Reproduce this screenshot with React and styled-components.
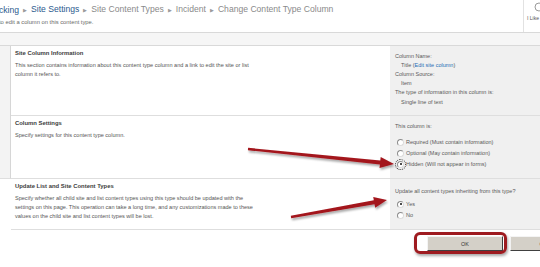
import styled, { createGlobalStyle } from "styled-components"

const Global = createGlobalStyle`
  html, body { margin: 0; padding: 0; background: #fff; }
`

const Page = styled.div`
  position: relative;
  width: 540px;
  height: 267px;
  overflow: hidden;
  background: #fff;
  font-family: "Liberation Sans", Arial, sans-serif;
  color: #555;
`

const Header = styled.header`
  display: flex;
  height: 33px;
  box-sizing: border-box;
  border-bottom: 1px solid #d9d9d9;
`

const TitleArea = styled.div`
  flex: 1;
  padding-top: 4px;
  margin-left: -1px;
  overflow: hidden;
`

const Crumbs = styled.div`
  display: flex;
  align-items: center;
  white-space: nowrap;
  font-size: 8.6px;
  line-height: 11px;
`

const Crumb = styled.span`
  color: ${(p) => (p.$link ? "#2b5a8e" : "#8a8a8a")};
`

const Sep = styled.span`
  color: #9a9a9a;
  font-size: 5px;
  margin: 0 4px;
`

const Subtitle = styled.div`
  font-size: 5.8px;
  color: #6a6a6a;
  margin-top: 3px;
  white-space: nowrap;
`

const Social = styled.div`
  width: 17px;
  border-left: 1px solid #e2e2e2;
  display: flex;
  flex-direction: column;
  padding: 2px 0 0 3px;
  box-sizing: border-box;
  overflow: hidden;
`

const SocialText = styled.span`
  font-size: 5px;
  color: #555;
  margin-top: 3px;
  white-space: nowrap;
`

const Band = styled.div`
  height: 12px;
  background: #f6f6f6;
  border-bottom: 1px solid #d9d9d9;
`

const Body = styled.div`
  display: flex;
  align-items: flex-start;
`

const Side = styled.div`
  width: 11px;
  height: 133px;
  flex-shrink: 0;
  background: #f3f3f3;
  border-right: 1px solid #d6d6d6;
  border-bottom: 1px solid #dedede;
  box-sizing: border-box;
`

const Main = styled.div`
  flex: 1;
`

const Section = styled.section`
  display: flex;
  height: ${(p) => p.$h}px;
  box-sizing: border-box;
  border-bottom: 1px solid #dedede;
`

const Describe = styled.div`
  width: 379px;
  flex-shrink: 0;
  box-sizing: border-box;
  padding: 3px 0 0 4px;
`

const SecTitle = styled.h3`
  margin: 0 0 3.5px;
  font-size: 5.9px;
  line-height: 8px;
  font-weight: bold;
  color: #3c3c3c;
`

const SecText = styled.p`
  margin: 0;
  max-width: 241px;
  font-size: 5.55px;
  line-height: 9px;
  color: #555;
`

const Field = styled.div`
  flex: 1;
  background: #f0f0f0;
  padding: ${(p) => p.$top}px 0 0 5px;
  font-size: 5.5px;
  line-height: 9.2px;
  color: #5a5a5a;
`

const Label = styled.div``

const Value = styled.div`
  padding-left: 6px;
`

const Link = styled.span`
  color: #1f6eb5;
`

const Options = styled.div`
  margin-top: ${(p) => p.$gap}px;
`

const Option = styled.label`
  display: flex;
  align-items: center;
  height: 11px;
  gap: 2px;
  padding-left: 2px;
`

const Radio = styled.span`
  position: relative;
  width: 5px;
  height: 5px;
  border-radius: 50%;
  background: #fff;
  border: 1px solid #8c8c8c;
  border-right-color: #dcdcdc;
  border-bottom-color: #dcdcdc;
  outline: ${(p) => (p.$focus ? "1px dotted #333" : "none")};
  outline-offset: 1px;
  &::after {
    content: "";
    display: ${(p) => (p.$on ? "block" : "none")};
    position: absolute;
    left: 1.5px;
    top: 1.5px;
    width: 2px;
    height: 2px;
    border-radius: 50%;
    background: #111;
  }
`

const ButtonRow = styled.div`
  position: relative;
  display: flex;
  gap: 7px;
  padding: 6px 0 0 427px;
  white-space: nowrap;
`

const Button = styled.button`
  flex-shrink: 0;
  width: 76px;
  height: 15px;
  padding: 0;
  background: #d4d0c8;
  border: 1px solid;
  border-color: #f4f4f4 #404040 #404040 #f4f4f4;
  font-family: "Liberation Sans", Arial, sans-serif;
  font-size: 5.4px;
  color: #333;
`

const Highlight = styled.div`
  position: absolute;
  left: 414px;
  top: 2px;
  width: 93px;
  height: 22px;
  box-sizing: border-box;
  border: 3px solid #9e1b20;
  border-radius: 6px;
  box-shadow: 1px 2px 3px rgba(0, 0, 0, 0.35);
`

const Overlay = styled.svg`
  position: absolute;
  left: 0;
  top: 0;
  pointer-events: none;
`

function Arrows() {
  return (
    <Overlay width="540" height="267" viewBox="0 0 540 267">
      <defs>
        <filter id="sh" x="-10%" y="-50%" width="120%" height="200%">
          <feDropShadow dx="1" dy="2" stdDeviation="1" floodColor="#000" floodOpacity="0.35" />
        </filter>
      </defs>
      <g fill="#a3151c" filter="url(#sh)">
        <polygon points="248.1,147.8 380.3,160.6 380.7,157.1 394,164 379.5,168.1 379.9,164.6 247.9,150.2" />
        <polygon points="290.8,215.8 373.9,200.3 373.2,196.9 387,200 375.2,207.7 374.5,204.3 291.2,218.2" />
      </g>
    </Overlay>
  )
}

const crumbs = [
  { t: "cking", link: true },
  { t: "Site Settings", link: true },
  { t: "Site Content Types" },
  { t: "Incident" },
  { t: "Change Content Type Column" },
]

export default function App() {
  return (
    <Page>
      <Global />
      <Header>
        <TitleArea>
          <Crumbs>
            {crumbs.map((c, i) => (
              <span key={c.t}>
                {i > 0 && <Sep>▶</Sep>}
                <Crumb $link={c.link}>{c.t}</Crumb>
              </span>
            ))}
          </Crumbs>
          <Subtitle>to edit a column on this content type.</Subtitle>
        </TitleArea>
        <Social>
          <svg width="14" height="10" viewBox="0 0 14 10">
            <circle cx="12" cy="5" r="4" fill="none" stroke="#9a9a9a" strokeWidth="1" />
          </svg>
          <SocialText>I Like It</SocialText>
        </Social>
      </Header>
      <Band />
      <Body>
        <Side />
        <Main>
          <Section $h={70}>
            <Describe>
              <SecTitle>Site Column Information</SecTitle>
              <SecText>
                This section contains information about this content type column and a link to edit the site or list
                column it refers to.
              </SecText>
            </Describe>
            <Field $top={5.5}>
              <Label>Column Name:</Label>
              <Value>
                Title (<Link>Edit site column</Link>)
              </Value>
              <Label>Column Source:</Label>
              <Value>Item</Value>
              <Label>The type of information in this column is:</Label>
              <Value>Single line of text</Value>
            </Field>
          </Section>
          <Section $h={63}>
            <Describe>
              <SecTitle>Column Settings</SecTitle>
              <SecText>Specify settings for this content type column.</SecText>
            </Describe>
            <Field $top={5.5}>
              <Label>This column is:</Label>
              <Options $gap={6}>
                <Option>
                  <Radio />
                  Required (Must contain information)
                </Option>
                <Option>
                  <Radio />
                  Optional (May contain information)
                </Option>
                <Option>
                  <Radio $on $focus />
                  Hidden (Will not appear in forms)
                </Option>
              </Options>
            </Field>
          </Section>
          <Section $h={51}>
            <Describe>
              <SecTitle>Update List and Site Content Types</SecTitle>
              <SecText>
                Specify whether all child site and list content types using this type should be updated with the
                settings on this page. This operation can take a long time, and any customizations made to these
                values on the child site and list content types will be lost.
              </SecText>
            </Describe>
            <Field $top={7.5}>
              <Label>Update all content types inheriting from this type?</Label>
              <Options $gap={3}>
                <Option>
                  <Radio $on />
                  Yes
                </Option>
                <Option>
                  <Radio />
                  No
                </Option>
              </Options>
            </Field>
          </Section>
        </Main>
      </Body>
      <ButtonRow>
        <Button>OK</Button>
        <Button>Cancel</Button>
        <Highlight />
      </ButtonRow>
      <Arrows />
    </Page>
  )
}
